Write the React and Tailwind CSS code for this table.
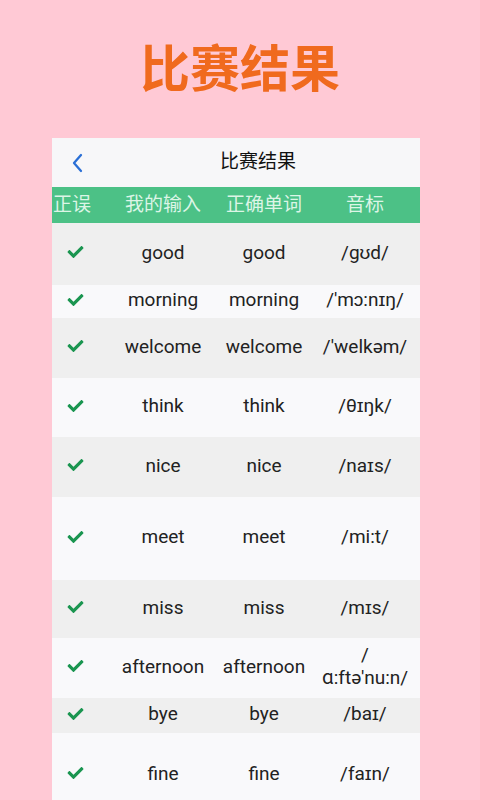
import React from 'react';
import { FaCheck } from 'react-icons/fa';

const rows = [
  { input: 'good', word: 'good', ipa: '/gʊd/', h: 'h-[62px]', bg: 'bg-[#efefef]' },
  { input: 'morning', word: 'morning', ipa: "/'mɔ:nɪŋ/", h: 'h-[33px]', bg: 'bg-[#f9f9fb]' },
  { input: 'welcome', word: 'welcome', ipa: "/'welkəm/", h: 'h-[60px]', bg: 'bg-[#efefef]' },
  { input: 'think', word: 'think', ipa: '/θɪŋk/', h: 'h-[59px]', bg: 'bg-[#f9f9fb]' },
  { input: 'nice', word: 'nice', ipa: '/naɪs/', h: 'h-[60px]', bg: 'bg-[#efefef]' },
  { input: 'meet', word: 'meet', ipa: '/mi:t/', h: 'h-[83px]', bg: 'bg-[#f9f9fb]' },
  { input: 'miss', word: 'miss', ipa: '/mɪs/', h: 'h-[58px]', bg: 'bg-[#efefef]' },
  { input: 'afternoon', word: 'afternoon', ipa: "/ɑ:ftə'nu:n/", split: true, h: 'h-[60px]', bg: 'bg-[#f9f9fb]' },
  { input: 'bye', word: 'bye', ipa: '/baɪ/', h: 'h-[35px]', bg: 'bg-[#efefef]' },
  { input: 'fine', word: 'fine', ipa: '/faɪn/', h: 'h-[84px]', bg: 'bg-[#f9f9fb]' },
];

const cjk = "font-['Roboto','Noto_Sans_CJK_SC',sans-serif]";

function App() {
  return (
    <div className={`h-[800px] overflow-hidden bg-[#ffc9d5] ${cjk}`}>
      <h1 className="pt-[40px] h-[138px] text-center text-[50px] leading-[60px] font-bold text-[#f06a1e]">
        比赛结果
      </h1>

      <div className="mx-[52px] w-[368px] bg-[#f9f9fb]">
        {/* top bar */}
        <div className="relative h-[49px] flex items-center justify-center bg-[#f7f7f9]">
          <svg className="absolute left-[19px] top-[15px]" width="13" height="20" viewBox="0 0 13 20">
            <polyline points="10,2 3,10 10,18" fill="none" stroke="#2a6fd6" strokeWidth="2.3" strokeLinecap="round" strokeLinejoin="round" />
          </svg>
          <span className="text-[19px] text-[#111] pl-[44px]">比赛结果</span>
        </div>

        {/* column titles */}
        <div className="grid grid-cols-[60px_102px_100px_106px] h-[36px] items-center bg-[#4cc186] text-[19px] text-[#dcf5e6]">
          <span className="pl-[1px]">正误</span>
          <span className="text-center">我的输入</span>
          <span className="text-center">正确单词</span>
          <span className="text-center pl-[7px] pr-[11px]">音标</span>
        </div>

        {rows.map((r) => (
          <div key={r.input} className={`grid grid-cols-[60px_102px_100px_106px] items-center pb-[4px] text-[19px] leading-[23px] text-[#222] ${r.h} ${r.bg}`}>
            <div className="pl-[14px]">
              <FaCheck className="text-[#1a9550] w-[19px] h-[16px]" />
            </div>
            <div className="text-center">{r.input}</div>
            <div className="text-center">{r.word}</div>
            <div className="text-center pl-[7px] pr-[11px]">
              {r.split ? (
                <>
                  /<br />
                  {r.ipa.slice(1)}
                </>
              ) : (
                r.ipa
              )}
            </div>
          </div>
        ))}
      </div>
    </div>
  );
}

export default App;
